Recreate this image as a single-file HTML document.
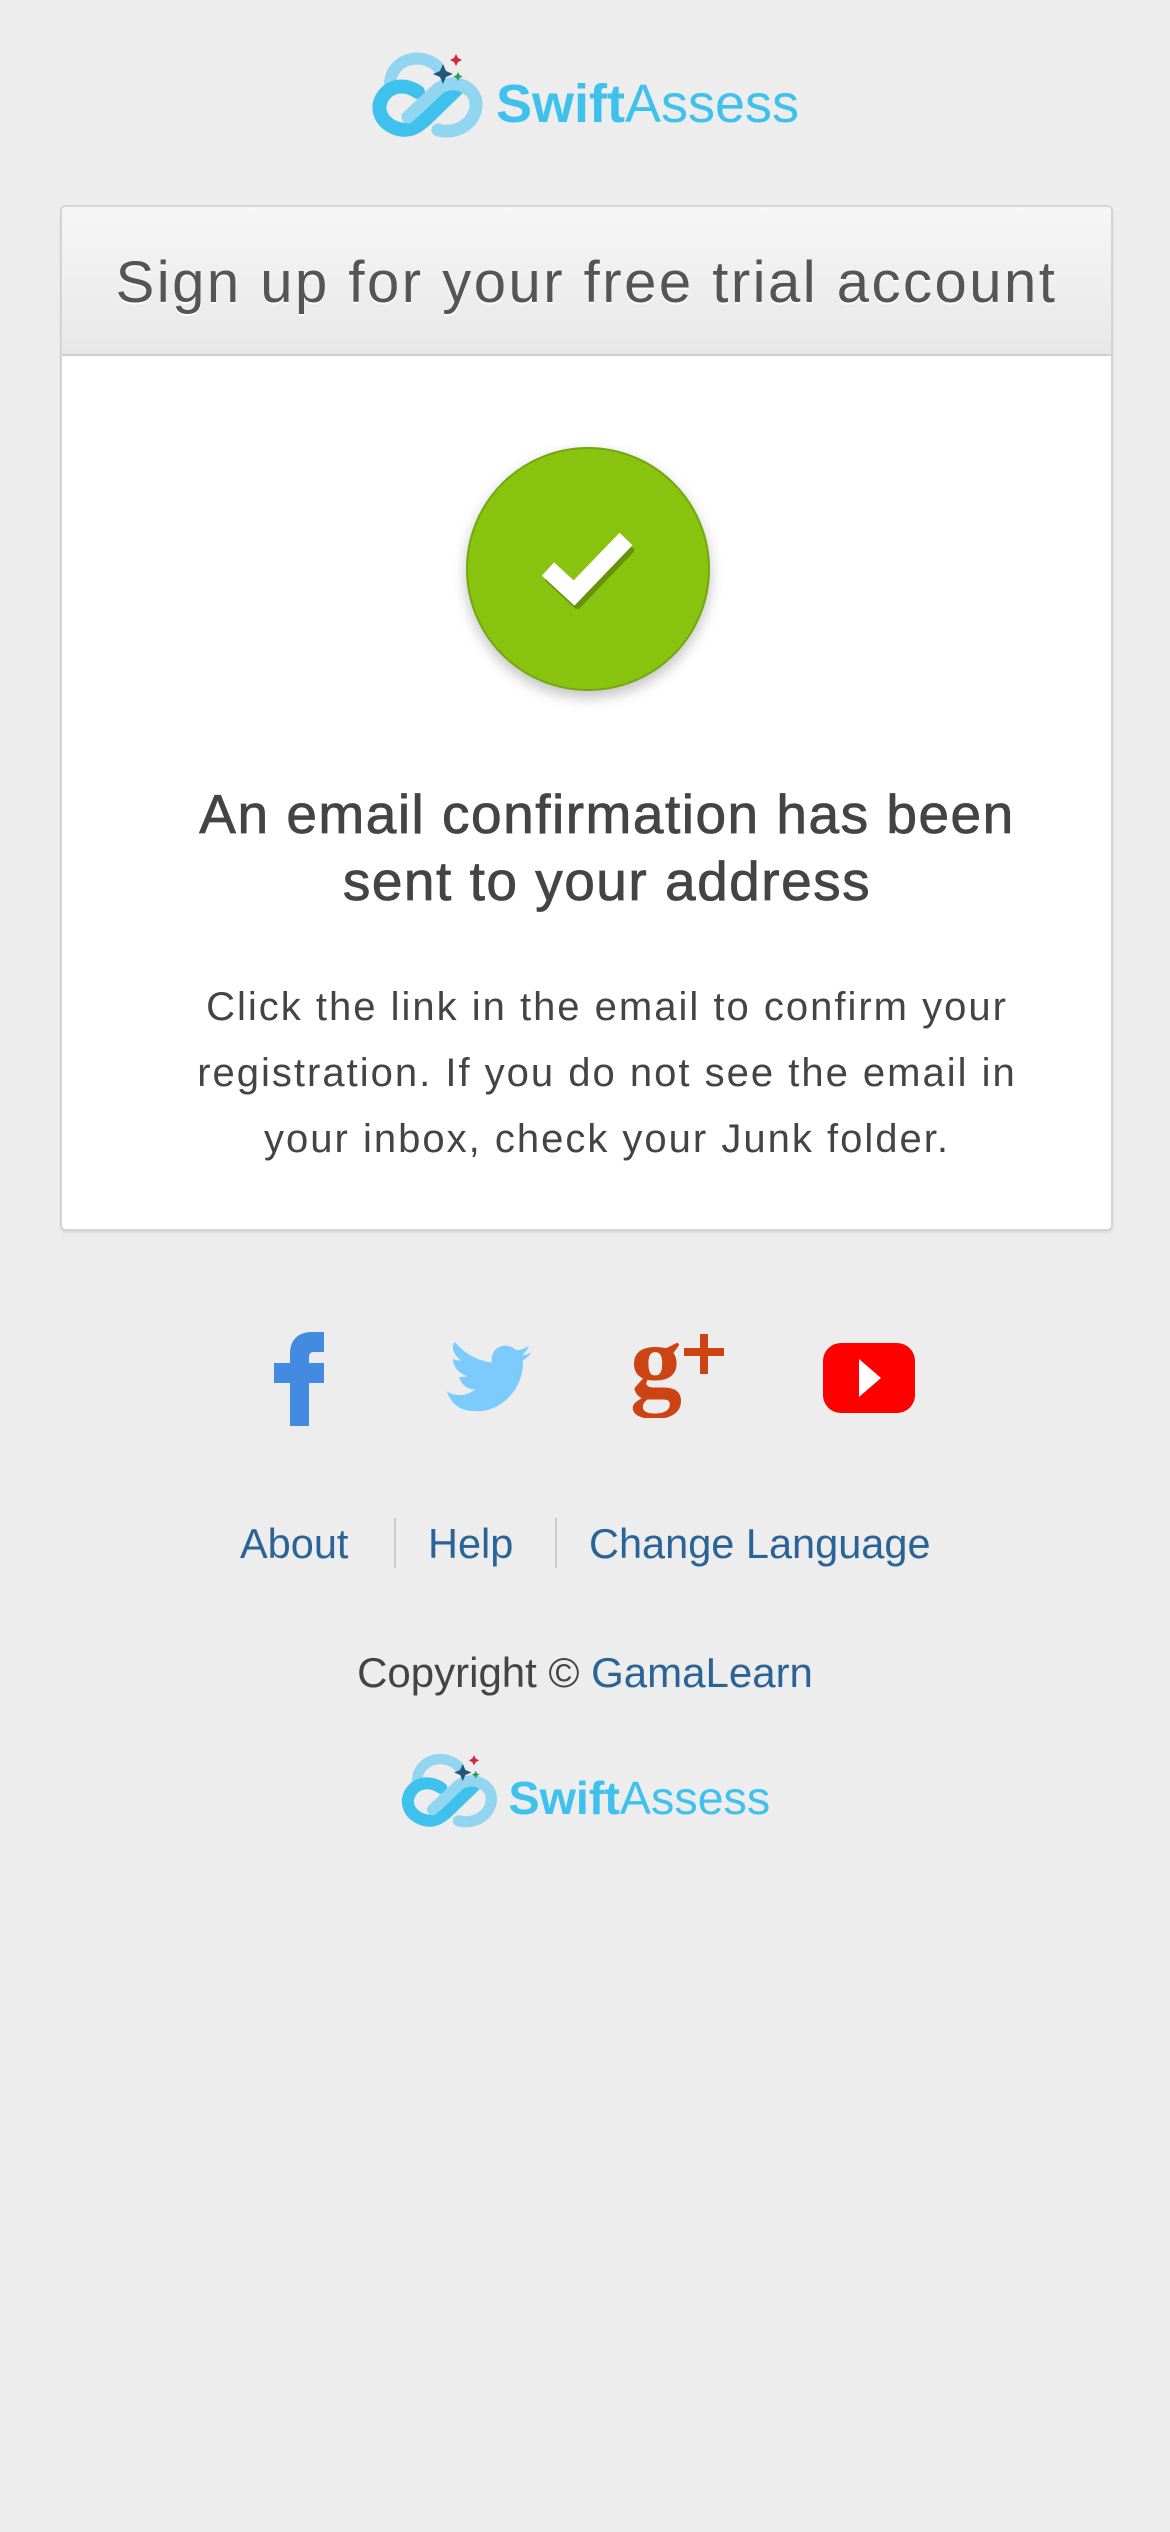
<!DOCTYPE html>
<html><head><meta charset="utf-8">
<style>
html,body{margin:0;padding:0;}
body{width:1170px;height:2532px;background:#ededed;font-family:"Liberation Sans",sans-serif;position:relative;overflow:hidden;}
.abs{position:absolute;}
.card{left:60px;top:205px;width:1049px;height:1022px;background:#fff;border:2px solid #d4d4d4;border-radius:6px;box-shadow:0 2px 2px rgba(0,0,0,.08);}
.head{left:0;top:0;width:1049px;height:147px;background:linear-gradient(#f6f6f6,#e8e8e8);border-bottom:2px solid #d0d0d0;border-radius:5px 5px 0 0;}
.title{left:0;width:1049px;top:42px;text-align:center;font-size:58px;color:#555;text-shadow:0 2px 0 #fff;letter-spacing:2.5px;}
.circle{left:404px;top:240px;width:240px;height:240px;border-radius:50%;background:#88c40f;border:2px solid #72a80c;box-shadow:0 6px 14px rgba(0,0,0,.25);}
h2{position:absolute;margin:0;left:40px;width:1010px;top:574px;text-align:center;font-size:55px;line-height:67px;font-weight:normal;color:#444;-webkit-text-stroke:0.8px #444;letter-spacing:1.5px;}
.p{left:40px;width:1010px;top:767px;text-align:center;font-size:40px;line-height:66px;color:#444;letter-spacing:2px;}
.links{top:1520px;font-size:41.5px;color:#2a6496;}
.sep{width:2px;height:50px;background:#ccc;top:1518px;}
</style></head><body>

<svg class="abs" style="left:368px;top:42px" width="440" height="100" viewBox="0 0 440 100">
  <path d="M22 40 C25 15 55 10 70 25" stroke="#92d5f0" stroke-width="12" fill="none" stroke-linecap="round"/>
  <path d="M50 50 C20 30 -5 70 25 85 C40 92 50 85 60 75 L88 48" stroke="#3fc1ee" stroke-width="14" fill="none" stroke-linecap="round"/>
  <path d="M40 75 L70 47 C85 35 110 45 108 65 C105 85 85 92 70 88" stroke="#92d5f0" stroke-width="13" fill="none" stroke-linecap="round"/>
  <path d="M75 22 l3 7 7 3 -7 3 -3 7 -3 -7 -7 -3 7 -3z" fill="#24577a"/>
  <path d="M88 12 l2 4 4 2 -4 2 -2 4 -2 -4 -4 -2 4 -2z" fill="#d8233d"/>
  <path d="M90 30 l1.5 3 3 1.5 -3 1.5 -1.5 3 -1.5 -3 -3 -1.5 3 -1.5z" fill="#22a04b"/>
  <text x="128" y="80" font-family="Liberation Sans" font-size="54" fill="#3fc1ee"><tspan font-weight="bold">Swift</tspan>Assess</text>
</svg>

<div class="abs card">
  <div class="abs head"><div class="abs title">Sign up for your free trial account</div></div>
  <div class="abs circle">
    <svg class="abs" style="left:74px;top:80px" width="92" height="80" viewBox="0 0 92 80">
      <path d="M6 40 L32 64 L84 10" stroke="#000" stroke-opacity=".25" stroke-width="18" fill="none" transform="translate(3,5)"/>
      <path d="M6 40 L32 64 L84 10" stroke="#fff" stroke-width="18" fill="none"/>
    </svg>
  </div>
  <h2>An email confirmation has been<br>sent to your address</h2>
  <div class="abs p">Click the link in the email to confirm your<br>registration. If you do not see the email in<br>your inbox, check your Junk folder.</div>
</div>

<!-- social -->
<svg class="abs" style="left:272px;top:1332px" width="56" height="94" viewBox="0 0 56 94">
  <path d="M18 94 V51 H2 V31 H18 V22 C18 8 26 0 40 0 H52 V20 H42 C38 20 37 22 37 26 V31 H52 V51 H37 V94 Z" fill="#428be0"/>
</svg>
<svg class="abs" style="left:444px;top:1342px" width="100" height="72" viewBox="0 0 96 70">
  <path d="M0 44 C10 50 20 48 28 42 C18 42 14 36 12 30 C16 30 18 30 20 29 C10 26 6 18 6 12 C8 14 12 14 14 14 C6 8 4 0 8 -4 C18 8 30 14 44 16 C42 2 56 -6 68 4 C72 4 76 2 80 0 C78 4 76 7 73 9 C76 9 79 8 82 6 C80 10 77 12 74 14 C76 40 52 70 18 62 C10 60 4 54 0 44Z" fill="#7ccbfc" transform="translate(2,4)"/>
</svg>
<svg class="abs" style="left:632px;top:1334px" width="100" height="84" viewBox="0 0 100 84">
  <text x="-2" y="62" font-family="Liberation Serif" font-size="104" font-weight="bold" fill="#cc4314">g</text>
  <path d="M52 18 H92 M72 0 V40" stroke="#cc4314" stroke-width="8"/>
</svg>
<svg class="abs" style="left:823px;top:1343px" width="92" height="70" viewBox="0 0 92 70">
  <rect x="0" y="0" width="92" height="70" rx="18" fill="#ff0000"/>
  <path d="M36 16 L58 35 L36 54Z" fill="#fff"/>
</svg>

<div class="abs links" style="left:240px">About</div>
<div class="abs sep" style="left:394px"></div>
<div class="abs links" style="left:428px">Help</div>
<div class="abs sep" style="left:555px"></div>
<div class="abs links" style="left:589px">Change Language</div>

<div class="abs" style="left:0;width:1170px;top:1649px;text-align:center;font-size:42px;color:#444;">Copyright © <span style="color:#2a6496">GamaLearn</span></div>

<svg class="abs" style="left:398px;top:1744px" width="380" height="88" viewBox="0 0 440 100">
  <path d="M22 40 C25 15 55 10 70 25" stroke="#92d5f0" stroke-width="12" fill="none" stroke-linecap="round"/>
  <path d="M50 50 C20 30 -5 70 25 85 C40 92 50 85 60 75 L88 48" stroke="#3fc1ee" stroke-width="14" fill="none" stroke-linecap="round"/>
  <path d="M40 75 L70 47 C85 35 110 45 108 65 C105 85 85 92 70 88" stroke="#92d5f0" stroke-width="13" fill="none" stroke-linecap="round"/>
  <path d="M75 22 l3 7 7 3 -7 3 -3 7 -3 -7 -7 -3 7 -3z" fill="#24577a"/>
  <path d="M88 12 l2 4 4 2 -4 2 -2 4 -2 -4 -4 -2 4 -2z" fill="#d8233d"/>
  <path d="M90 30 l1.5 3 3 1.5 -3 1.5 -1.5 3 -1.5 -3 -3 -1.5 3 -1.5z" fill="#22a04b"/>
  <text x="128" y="80" font-family="Liberation Sans" font-size="54" fill="#3fc1ee"><tspan font-weight="bold">Swift</tspan>Assess</text>
</svg>

</body></html>
